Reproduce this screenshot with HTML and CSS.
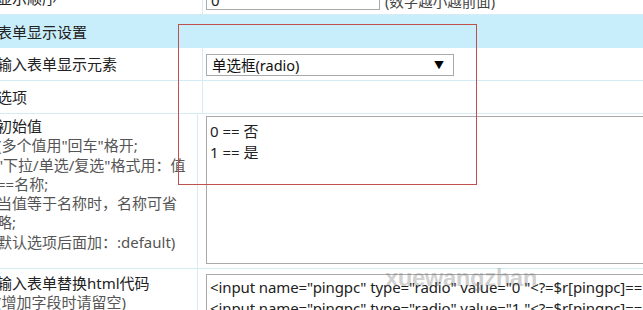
FILE: index.html
```html
<!DOCTYPE html>
<html lang="zh">
<head>
<meta charset="utf-8">
<link rel="stylesheet" href="styles.css">
</head>
<body>
<div class="page">
  <div class="form">
    <div class="row">
      <div class="label">显示顺序</div>
      <div class="field inline">
        <span class="text-input">0</span>
        <span class="hint">(数字越小越前面)</span>
      </div>
    </div>
    <div class="row head">
      <div class="label">表单显示设置</div>
    </div>
    <div class="row">
      <div class="label">输入表单显示元素</div>
      <div class="field center">
        <div class="select"><span>单选框(radio)</span><span class="arrow">▼</span></div>
      </div>
    </div>
    <div class="row">
      <div class="label">选项</div>
      <div class="field"></div>
    </div>
    <div class="row tall">
      <div class="label multi">
        <div class="main">初始值</div>
        <div class="note">(多个值用"回车"格开;<br>"下拉/单选/复选"格式用：值<br>==名称;<br>当值等于名称时，名称可省<br>略;<br>默认选项后面加：:default)</div>
      </div>
      <div class="field">
        <div class="textarea big">0 == 否<br>1 == 是</div>
      </div>
    </div>
    <div class="row last">
      <div class="label multi low">
        <div class="main">输入表单替换html代码</div>
        <div class="note">(增加字段时请留空)</div>
      </div>
      <div class="field">
        <div class="textarea code">&lt;input name="pingpc" type="radio" value="0 "&lt;?=$r[pingpc]==""?" checked":""?&gt;&gt;否<br>&lt;input name="pingpc" type="radio" value="1 "&lt;?=$r[pingpc]=="1"?" checked":""?&gt;&gt;是</div>
      </div>
    </div>
  </div>
  <div class="highlight"></div>
  <div class="watermark">xuewangzhan</div>
</div>
</body>
</html>
```
FILE: styles.css
```css
html, body {
  margin: 0;
  padding: 0;
  width: 643px;
  height: 310px;
  overflow: hidden;
  background: #fff;
}
.page {
  position: relative;
  width: 643px;
  height: 310px;
  overflow: hidden;
  font-family: "Noto Sans", "Noto Sans CJK SC", sans-serif;
  font-size: 15px;
  color: #222;
}
.form {
  margin-left: -8px;
  margin-top: -18px;
  width: 900px;
}
.row {
  display: grid;
  grid-template-columns: 211px 1fr;
  border-bottom: 1px solid #d6ecf4;
  height: 33px;
  box-sizing: border-box;
}
.row.head {
  background: #c9eefb;
  grid-template-columns: 1fr;
  height: 33px;
  border-bottom: none;
}
.row.tall { height: 155px; }
.row.last { height: 60px; border-bottom: none; }
.label {
  padding-left: 5px;
  display: flex;
  align-items: center;
  border-right: 1px solid #d6ecf4;
  white-space: nowrap;
  line-height: 1;
}
.head .label { border-right: none; padding-top: 1px; }
.label.multi {
  flex-direction: column;
  align-items: flex-start;
  justify-content: flex-start;
  padding-top: 3px;
  line-height: 19.3px;
  width: 200px;
  border-right: none;
  box-shadow: 1px 0 0 #d6ecf4;
}
.label.multi.low { padding-top: 5px; }
.note { color: #555; }
.field {
  padding-left: 3px;
  display: flex;
}
.field.inline { align-items: center; gap: 5px; }
.field.center { align-items: center; }
.text-input {
  display: block;
  width: 174px;
  height: 20px;
  box-sizing: border-box;
  border: 1px solid #a9a9a9;
  padding: 0 4px;
  line-height: 18px;
  margin-top: 4px;
}
.hint { color: #444; margin-top: 4px; font-size: 14.5px; }
.select {
  width: 248px;
  height: 22px;
  box-sizing: border-box;
  border: 1px solid #a9a9a9;
  display: flex;
  align-items: center;
  justify-content: space-between;
  padding: 0 9px 0 5px;
  color: #111;
  margin-top: 1px;
  font-size: 14.5px;
}
.arrow { font-size: 10px; color: #000; }
.textarea {
  border: 1px solid #a9a9a9;
  box-sizing: border-box;
  width: 520px;
  padding: 4px 3px;
  line-height: 21px;
  color: #222;
  white-space: nowrap;
  overflow: hidden;
}
.textarea.big { height: 148px; margin-top: 2px; }
.textarea.code { height: 60px; margin-top: 5px; padding-top: 2px; letter-spacing: -0.1px; }
.highlight {
  position: absolute;
  left: 178px;
  top: 24px;
  width: 299px;
  height: 161px;
  border: 1px solid #c0504d;
  box-sizing: border-box;
}
.watermark {
  position: absolute;
  left: 385px;
  top: 264px;
  font-family: "Liberation Sans", sans-serif;
  font-weight: bold;
  font-size: 24px;
  letter-spacing: -0.5px;
  color: rgba(110, 110, 110, 0.32);
}
```
